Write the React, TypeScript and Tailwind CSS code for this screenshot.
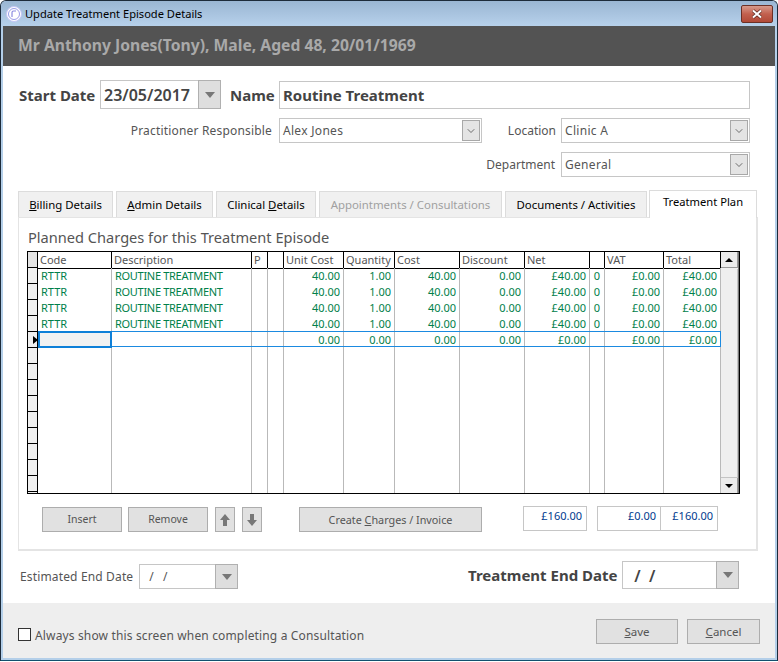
import React from 'react';
import { ChevronDown } from 'lucide-react';

const colTemplate = 'grid grid-cols-[74px_140px_16px_16px_60px_51px_65px_65px_65px_15px_59px_57px]';
const headers = ['Code', 'Description', 'P', '', 'Unit Cost', 'Quantity', 'Cost', 'Discount', 'Net', '', 'VAT', 'Total'];
const filled = ['RTTR', 'ROUTINE TREATMENT', '', '', '40.00', '1.00', '40.00', '0.00', '£40.00', '0', '£0.00', '£40.00'];
const current = ['', '', '', '', '0.00', '0.00', '0.00', '0.00', '£0.00', '', '£0.00', '£0.00'];
const blank = ['', '', '', '', '', '', '', '', '', '', '', ''];

const DateBox = ({ value, className, bold }: { value: string; className: string; bold?: boolean }) => (
  <div className={`flex border border-[#c6c6c6] bg-white ${className}`}>
    <div className={`flex-1 flex items-center pl-[3px] pt-px ${bold ? 'text-[16px] font-semibold text-[#444]' : 'text-[12px] text-[#555]'}`}>{value}</div>
    <div className="w-[23px] -my-px -mr-px flex items-center justify-center bg-[#dedede] border border-[#b0b0b0]">
      <div className="w-0 h-0 border-x-[5px] border-x-transparent border-t-[6px] border-t-[#777]" />
    </div>
  </div>
);

const SelectBox = ({ value, className }: { value: string; className: string }) => (
  <div className={`flex items-center border border-[#c6c6c6] bg-white pl-[3px] pr-px ${className}`}>
    <span className="flex-1 pt-px text-[12px] tracking-[0.3px] text-[#555]">{value}</span>
    <div className="w-[18px] h-[21px] flex items-center justify-center bg-[#e4e4e4] border border-[#a8a8a8]">
      <ChevronDown className="w-3 h-3 text-[#444]" strokeWidth={1.5} />
    </div>
  </div>
);

const Tab = ({ className, children, muted }: { className: string; children: React.ReactNode; muted?: boolean }) => (
  <div className={`h-[26px] pt-px flex items-center justify-center bg-[#f0f0f0] border border-b-0 border-[#dcdcdc] text-[11.4px] ${muted ? 'text-[#a0a0a0]' : 'text-black'} ${className}`}>
    {children}
  </div>
);

const GreyButton = ({ className, children }: { className: string; children: React.ReactNode }) => (
  <div className={`h-[25px] pt-px flex items-center justify-center bg-[#e1e1e1] border border-[#adadad] text-[#555] ${className}`}>
    {children}
  </div>
);

const GridRow = ({ cells }: { cells: string[] }) => (
  <div className={`${colTemplate} h-4`}>
    {cells.map((text, i) => (
      <div
        key={i}
        className={`border-r border-[#b9b9b9] text-[11px] leading-[16px] text-[#00804a] overflow-hidden whitespace-nowrap ${
          i === 0 ? 'pl-[3px]' : i === 1 ? 'pl-[3px] tracking-[-0.3px]' : i === 9 ? 'text-center' : 'text-right pr-[3px]'
        }`}
      >
        {text}
      </div>
    ))}
  </div>
);

const Indicator = ({ active }: { active?: boolean }) => (
  <div className="h-4 bg-[#f0f0f0] border-b border-black flex items-center">
    {active && <div className="w-0 h-0 ml-[5px] border-y-[4px] border-y-transparent border-l-[5px] border-l-black" />}
  </div>
);

export default function App() {
  return (
    <div className="w-[778px] h-[661px] flex flex-col overflow-hidden rounded-t-[6px] border border-[#1d2b3a] border-b-[#12506e] bg-[#b4cfe9] font-['Noto_Sans',sans-serif]">
      {/* Title bar */}
      <div className="h-[25px] shrink-0 flex items-center pl-[5px] pr-[4px] bg-gradient-to-b from-[#9ab6d3] to-[#b7d1eb]">
        <svg width="16" height="16" viewBox="0 0 16 16" className="shrink-0">
          <circle cx="8" cy="8" r="7.5" fill="#fff" stroke="#c5c5f5" />
          <circle cx="8" cy="8" r="5.5" fill="none" stroke="#9c9ce8" />
          <path d="M6 11V6.5A1.5 1.5 0 0 1 7.5 5H10" fill="none" stroke="#8a8ae0" strokeWidth="1.2" />
        </svg>
        <span className="ml-[3px] pt-[2px] flex-1 text-[11.1px] text-black">Update Treatment Episode Details</span>
        <div className="w-[32px] h-[18px] flex items-center justify-center rounded-[2px] border border-[#6b3026] bg-gradient-to-b from-[#d69a8c] via-[#c2604e] to-[#b14a38]">
          <svg width="12" height="10" viewBox="0 0 12 10">
            <path d="M2 1.5 10 8.5M10 1.5 2 8.5" stroke="#5a2a20" strokeWidth="3.4" />
            <path d="M2 1.5 10 8.5M10 1.5 2 8.5" stroke="#fff" strokeWidth="2" />
          </svg>
        </div>
      </div>

      <div className="flex-1 mx-[2px] mb-[2px] flex flex-col bg-white">
        {/* Patient banner */}
        <div className="h-[40px] shrink-0 flex items-center pl-[15px] bg-[#535353] text-[15.7px] font-bold text-[#a9a9a9]">
          Mr Anthony Jones(Tony), Male, Aged 48, 20/01/1969
        </div>

        {/* Form */}
        <div className="flex-1 pl-[15px]">
          <div className="mt-[14px] h-[29px] flex items-center">
            <span className="w-[82px] pl-px pt-px text-[15px] font-bold text-[#444]">Start Date</span>
            <DateBox value="23/05/2017" bold className="w-[121px] h-[29px]" />
            <span className="ml-[9px] w-[49px] pt-[2px] text-[15px] font-bold text-[#444]">Name</span>
            <div className="w-[471px] h-[28px] flex items-center pl-[3px] pt-[2px] border border-[#c6c6c6] text-[15px] font-bold text-[#444]">
              Routine Treatment
            </div>
          </div>

          <div className="mt-[9px] h-[25px] flex items-center">
            <span className="w-[254px] text-right text-[12px] tracking-[0.18px] text-[#555]">Practitioner Responsible</span>
            <SelectBox value="Alex Jones" className="ml-[7px] w-[203px] h-[25px]" />
            <span className="w-[74px] pt-px text-right text-[12px] text-[#555]">Location</span>
            <SelectBox value="Clinic A" className="ml-[5px] w-[189px] h-[25px]" />
          </div>

          <div className="mt-[9px] h-[25px] flex items-center">
            <span className="w-[537px] pt-px text-right text-[12px] text-[#555]">Department</span>
            <SelectBox value="General" className="ml-[6px] w-[189px] h-[25px]" />
          </div>

          {/* Tabs */}
          <div className="mt-[12px] h-[28px] flex items-end">
            <Tab className="w-[95px]"><span><u>B</u>illing Details</span></Tab>
            <Tab className="ml-[3px] w-[97px]"><span><u>A</u>dmin Details</span></Tab>
            <Tab className="ml-[3px] w-[100px]"><span>Clinical <u>D</u>etails</span></Tab>
            <Tab muted className="ml-[3px] w-[183px]">Appointments / Consultations</Tab>
            <Tab className="ml-[3px] w-[142px]">Documents / Activities</Tab>
            <div className="ml-[2px] w-[108px] h-[28px] pb-[4px] flex items-center justify-center bg-white border border-b-0 border-[#dcdcdc] text-[11.2px] text-black relative z-10 -mb-px">
              Treatment Plan
            </div>
          </div>

          {/* Tab page */}
          <div className="w-[740px] h-[334px] border-[2px] border-t border-l border-[#e4e4e4] pl-[8px]">
            <div className="h-[33px] pt-[8px] pl-px text-[14.6px] leading-[22px] text-[#555]">Planned Charges for this Treatment Episode</div>

            {/* Charges grid */}
            <div className="w-[713px] h-[243px] flex overflow-hidden border border-black">
              <div className="w-[9px] shrink-0 border-r border-black box-content">
                <div className="h-4 bg-[#e4e4e4] border-b border-black" />
                {[0, 1, 2, 3].map((i) => <Indicator key={i} />)}
                <Indicator active />
                {[0, 1, 2, 3, 4, 5, 6, 7, 8, 9].map((i) => <Indicator key={i} />)}
              </div>
              <div className="w-[683px] shrink-0 relative">
                <div className={`${colTemplate} h-4 border-b border-black box-content -mb-px`}>
                  {headers.map((h, i) => (
                    <div key={i} className="border-r border-black pl-[2px] text-[11px] leading-[15px] text-[#555] whitespace-nowrap overflow-hidden">{h}</div>
                  ))}
                </div>
                {[0, 1, 2, 3].map((i) => <GridRow key={i} cells={filled} />)}
                <GridRow cells={current} />
                {[0, 1, 2, 3, 4, 5, 6, 7, 8, 9].map((i) => <GridRow key={i} cells={blank} />)}
                {/* current row highlight */}
                <div className="absolute left-0 right-0 top-[79px] h-[16px] border border-[#1b8ae0]" />
                <div className="absolute left-0 top-[79px] w-[74px] h-[17px] border-2 border-[#0f80d8] bg-[#f2f2f2]" />
              </div>
              <div className="w-[18px] shrink-0 border-r border-[#777] flex flex-col bg-[#f0f0f0]">
                <div className="h-[16px] flex items-center justify-center bg-[#ececec] border-b border-[#9a9a9a] border-r border-r-[#9a9a9a]">
                  <div className="w-0 h-0 border-x-[4px] border-x-transparent border-b-[4px] border-b-black" />
                </div>
                <div className="flex-1 mt-px border-r border-b border-[#c4c4c4] bg-[#efefef]" />
                <div className="h-[15px] flex items-center justify-center bg-[#ececec] border-r border-[#9a9a9a]">
                  <div className="w-0 h-0 border-x-[4px] border-x-transparent border-t-[4px] border-t-black" />
                </div>
              </div>
            </div>

            {/* Grid actions and totals */}
            <div className="mt-[12px] flex items-start">
              <GreyButton className="ml-[15px] w-[80px] mt-px text-[10.5px]">Insert</GreyButton>
              <GreyButton className="ml-[6px] w-[80px] mt-px text-[10.5px]">Remove</GreyButton>
              <GreyButton className="ml-[7px] w-[20px] mt-px">
                <svg width="12" height="14" viewBox="0 0 12 14"><path d="M6 1 11 7H8v6H4V7H1z" fill="#777" /></svg>
              </GreyButton>
              <GreyButton className="ml-[7px] w-[20px] mt-px">
                <svg width="12" height="14" viewBox="0 0 12 14"><path d="M6 13 11 7H8V1H4v6H1z" fill="#777" /></svg>
              </GreyButton>
              <GreyButton className="ml-[37px] w-[183px] mt-px text-[10.8px]"><span>Create <u>C</u>harges / Invoice</span></GreyButton>
              <div className="ml-[41px] w-[64px] h-[25px] pr-[4px] border border-[#c6c6c6] text-right text-[11px] leading-[17px] text-[#003b8e]">£160.00</div>
              <div className="ml-[10px] w-[64px] h-[25px] pr-[4px] border border-[#c6c6c6] text-right text-[11px] leading-[17px] text-[#003b8e]">£0.00</div>
              <div className="-ml-px w-[58px] h-[25px] pr-[4px] border border-[#c6c6c6] text-right text-[11px] leading-[17px] text-[#003b8e]">£160.00</div>
            </div>
          </div>

          {/* End dates */}
          <div className="mt-[10px] h-[28px] flex items-end">
            <span className="ml-[2px] w-[119px] h-[25px] text-[12px] tracking-[0.15px] leading-[25px] text-[#555]">Estimated End Date</span>
            <DateBox value="  /   /" className="w-[99px] h-[25px] whitespace-pre" />
            <span className="ml-[230px] w-[154px] h-[28px] text-[15px] font-bold leading-[28px] text-[#444]">Treatment End Date</span>
            <DateBox value="  /  /" bold className="w-[117px] h-[28px] whitespace-pre" />
          </div>
        </div>

        {/* Footer */}
        <div className="h-[55px] shrink-0 flex items-start pl-[15px] bg-[#eeeeee]">
          <div className="mt-[25px] w-[13px] h-[13px] border border-[#333] bg-white" />
          <span className="mt-[23px] ml-[4px] flex-1 text-[12px] tracking-[0.15px] leading-[19px] text-[#555]">Always show this screen when completing a Consultation</span>
          <GreyButton className="mt-[16px] w-[82px] text-[11.5px]"><span><u>S</u>ave</span></GreyButton>
          <GreyButton className="mt-[16px] ml-[9px] mr-[15px] w-[73px] text-[11.5px]"><span><u>C</u>ancel</span></GreyButton>
        </div>
      </div>
    </div>
  );
}
